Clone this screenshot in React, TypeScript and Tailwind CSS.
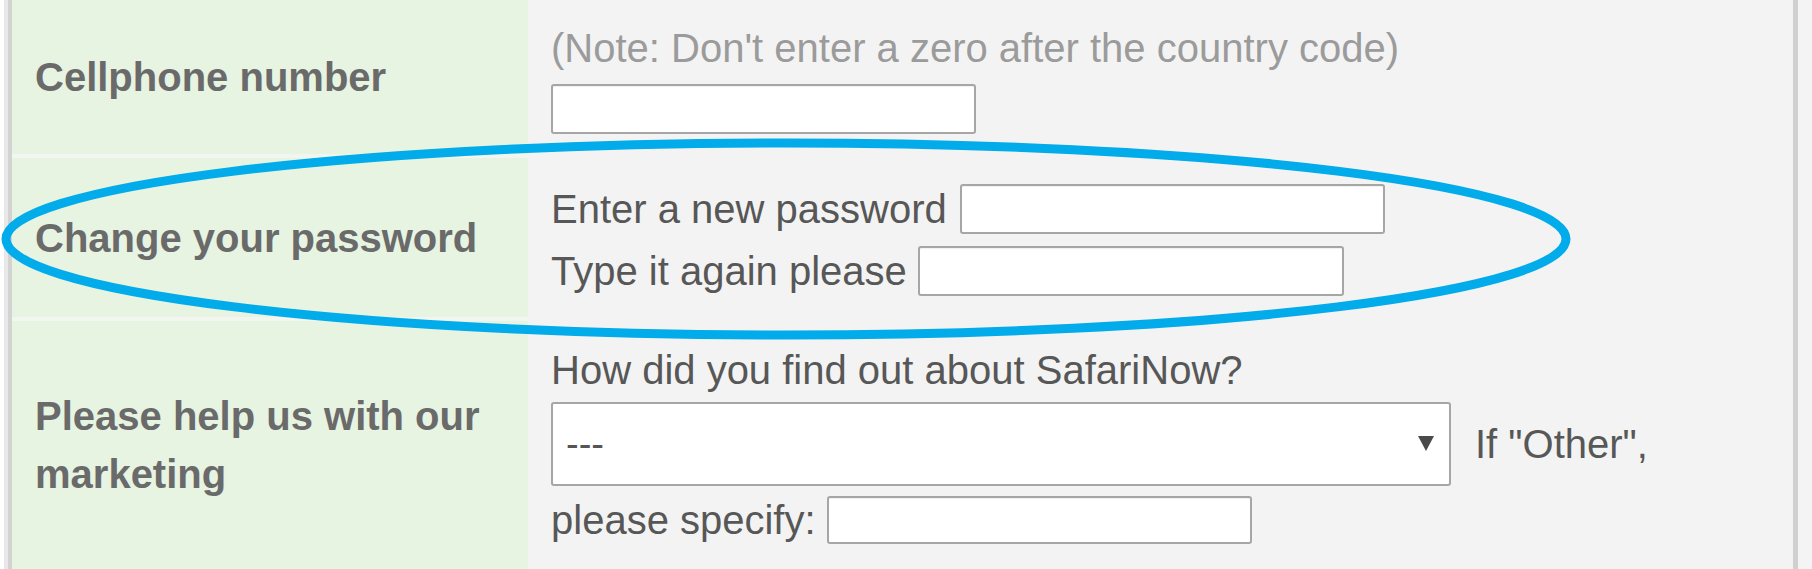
import type { ReactNode } from 'react'

/** One form row: green label cell on the left, grey field cell on the right. */
function FormRow({
  label,
  height,
  separator = true,
  children,
}: {
  label: ReactNode
  height: string
  separator?: boolean
  children: ReactNode
}) {
  return (
    <div className={`grid grid-cols-[516px_1fr] ${height}`}>
      <div
        className={`flex items-center bg-[#e6f4e1] px-[23px] text-[40px] font-bold leading-[58px] text-[#6a6a6a] ${
          separator ? 'border-b-4 border-[#f2f5f0]' : ''
        }`}
      >
        {label}
      </div>
      <div className="flex flex-col justify-center bg-[#f3f3f3] pl-[23px] text-[40px] leading-[46px] text-[#575757]">
        {children}
      </div>
    </div>
  )
}

function TextBox({ w = 'w-[425px]', h = 'h-[50px]' }: { w?: string; h?: string }) {
  return (
    <input
      type="text"
      className={`${w} ${h} shrink-0 rounded-[3px] border-2 border-[#a6a6a6] bg-white shadow-[inset_0_1px_1px_rgba(0,0,0,0.06)] outline-none`}
    />
  )
}

export default function App() {
  return (
    <div className="relative h-[569px] w-[1812px] overflow-hidden bg-white font-['Liberation_Sans',Arial,sans-serif]">
      <div className="flex h-full">
        <div className="w-[4px] shrink-0 bg-white" />
        <div className="flex h-full flex-1 border-l-4 border-[#e8e8e8]">
          <div className="flex h-full flex-1 flex-col border-l-4 border-r-[5px] border-l-[#d3d3d3] border-r-[#d0d0d0]">
            <FormRow label="Cellphone number" height="h-[158px]">
              <div className="text-[#9b9b9b]">(Note: Don&apos;t enter a zero after the country code)</div>
              <div className="mt-[13px] flex">
                <TextBox />
              </div>
            </FormRow>

            <FormRow label="Change your password" height="h-[163px]">
              <div className="flex flex-col gap-[12px]">
                <div className="flex items-center gap-[13px]">
                  <span>Enter a new password</span>
                  <TextBox />
                </div>
                <div className="flex items-center gap-[11px]">
                  <span>Type it again please</span>
                  <TextBox w="w-[426px]" />
                </div>
              </div>
            </FormRow>

            <FormRow label="Please help us with our marketing" height="flex-1" separator={false}>
              <div>How did you find out about SafariNow?</div>
              <div className="mt-[9px] flex items-center">
                <div className="flex h-[84px] w-[900px] shrink-0 items-center justify-between rounded-[3px] border-2 border-[#a6a6a6] bg-white pl-[13px] pr-[15px] text-[#555]">
                  <span className="text-[38px]">---</span>
                  <svg width="16" height="15" viewBox="0 0 16 15" aria-hidden="true">
                    <path d="M0 0 H16 L8 15 Z" fill="#4a4a4a" />
                  </svg>
                </div>
                <span className="ml-[24px]">If &quot;Other&quot;,</span>
              </div>
              <div className="mt-[10px] flex items-center gap-[11px]">
                <span>please specify:</span>
                <TextBox h="h-[48px]" />
              </div>
            </FormRow>
          </div>
          <div className="w-[14px] shrink-0 bg-[#f4f4f4]" />
        </div>
      </div>

      {/* hand-drawn highlight round the password row */}
      <svg
        className="pointer-events-none absolute left-0 top-0"
        width="1812"
        height="569"
        aria-hidden="true"
      >
        <ellipse cx="786" cy="239" rx="780" ry="96" fill="none" stroke="#02abe9" strokeWidth="9" />
      </svg>
    </div>
  )
}
